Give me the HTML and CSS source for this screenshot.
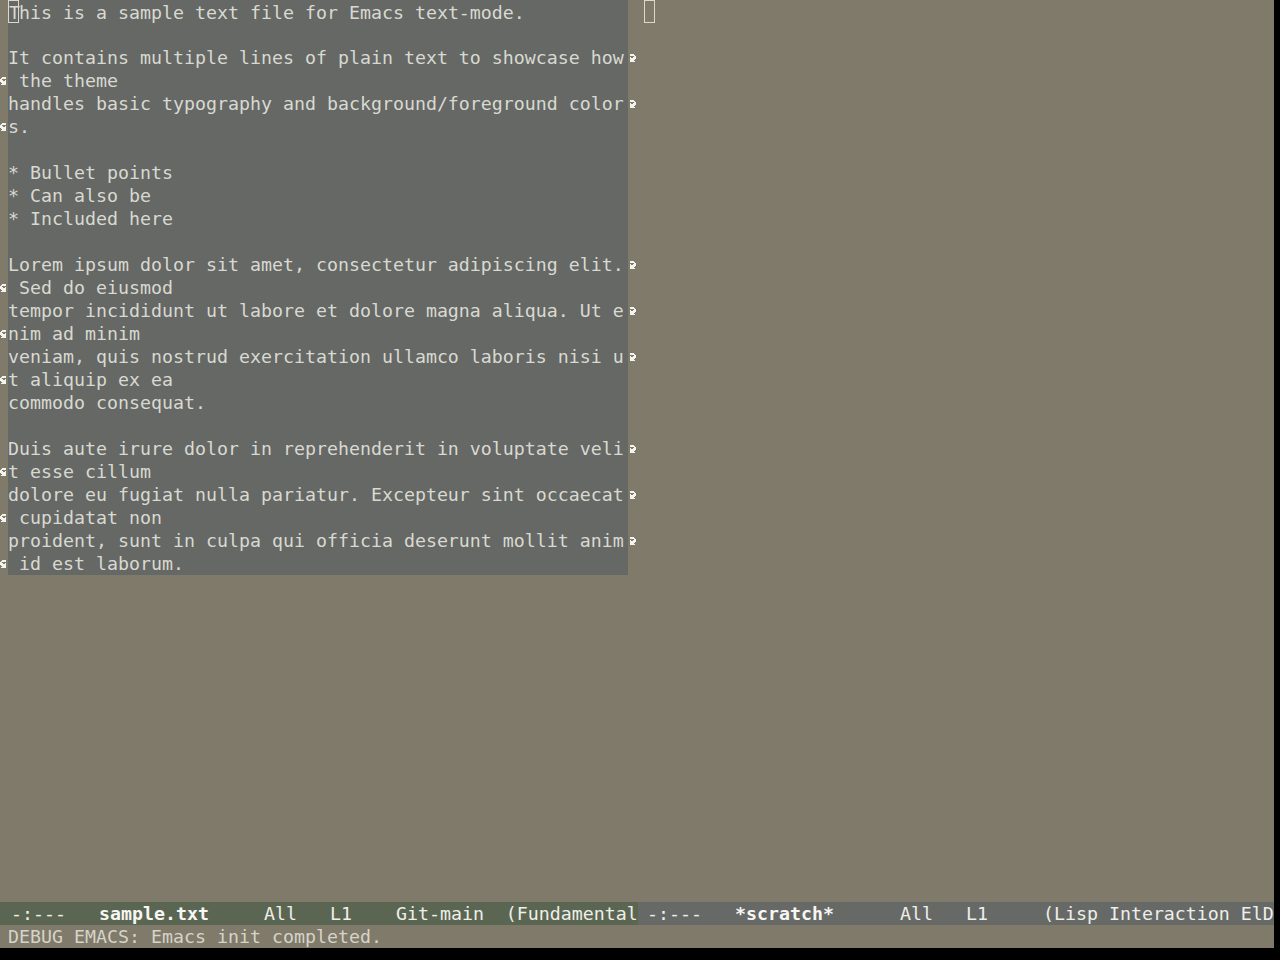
FILE: index.html
```html
<!DOCTYPE html>
<html lang="en">
<head>
    <meta charset="UTF-8">
    <title>sample.txt - Emacs</title>
    <link rel="stylesheet" href="styles.css">
</head>
<body>

    <svg class="defs" width="0" height="0">
        <!-- right-curly-arrow / left-curly-arrow fringe bitmaps, 8x8 -->
        <symbol id="rca" viewBox="0 0 8 8">
            <path d="M2 0h4v1h-4z M2 1h5v1h-5z M6 2h2v1h-2z M2 3h1v1h-1z M5 3h3v1h-3z M2 4h6v1h-6z M2 5h5v1h-5z M2 6h4v1h-4z M2 7h5v1h-5z"/>
        </symbol>
        <symbol id="lca" viewBox="0 0 8 8">
            <path d="M2 0h4v1h-4z M1 1h5v1h-5z M0 2h2v1h-2z M0 3h3v1h-3z M5 3h1v1h-1z M0 4h6v1h-6z M1 5h5v1h-5z M2 6h4v1h-4z M1 7h5v1h-5z"/>
        </symbol>
    </svg>

    <div class="frame">
        <div class="windows">
            <div class="window">
                <div class="line"><span class="fringe"></span><span class="text"><span class="cursor">T</span>his is a sample text file for Emacs text-mode.</span><span class="fringe"></span></div>
                <div class="line"><span class="fringe"></span><span class="text"></span><span class="fringe"></span></div>
                <div class="line"><span class="fringe"></span><span class="text">It contains multiple lines of plain text to showcase how</span><span class="fringe"><svg class="arrow"><use href="#rca"/></svg></span></div>
                <div class="line"><span class="fringe"><svg class="arrow"><use href="#lca"/></svg></span><span class="text"> the theme</span><span class="fringe"></span></div>
                <div class="line"><span class="fringe"></span><span class="text">handles basic typography and background/foreground color</span><span class="fringe"><svg class="arrow"><use href="#rca"/></svg></span></div>
                <div class="line"><span class="fringe"><svg class="arrow"><use href="#lca"/></svg></span><span class="text">s.</span><span class="fringe"></span></div>
                <div class="line"><span class="fringe"></span><span class="text"></span><span class="fringe"></span></div>
                <div class="line"><span class="fringe"></span><span class="text">* Bullet points</span><span class="fringe"></span></div>
                <div class="line"><span class="fringe"></span><span class="text">* Can also be</span><span class="fringe"></span></div>
                <div class="line"><span class="fringe"></span><span class="text">* Included here</span><span class="fringe"></span></div>
                <div class="line"><span class="fringe"></span><span class="text"></span><span class="fringe"></span></div>
                <div class="line"><span class="fringe"></span><span class="text">Lorem ipsum dolor sit amet, consectetur adipiscing elit.</span><span class="fringe"><svg class="arrow"><use href="#rca"/></svg></span></div>
                <div class="line"><span class="fringe"><svg class="arrow"><use href="#lca"/></svg></span><span class="text"> Sed do eiusmod</span><span class="fringe"></span></div>
                <div class="line"><span class="fringe"></span><span class="text">tempor incididunt ut labore et dolore magna aliqua. Ut e</span><span class="fringe"><svg class="arrow"><use href="#rca"/></svg></span></div>
                <div class="line"><span class="fringe"><svg class="arrow"><use href="#lca"/></svg></span><span class="text">nim ad minim</span><span class="fringe"></span></div>
                <div class="line"><span class="fringe"></span><span class="text">veniam, quis nostrud exercitation ullamco laboris nisi u</span><span class="fringe"><svg class="arrow"><use href="#rca"/></svg></span></div>
                <div class="line"><span class="fringe"><svg class="arrow"><use href="#lca"/></svg></span><span class="text">t aliquip ex ea</span><span class="fringe"></span></div>
                <div class="line"><span class="fringe"></span><span class="text">commodo consequat.</span><span class="fringe"></span></div>
                <div class="line"><span class="fringe"></span><span class="text"></span><span class="fringe"></span></div>
                <div class="line"><span class="fringe"></span><span class="text">Duis aute irure dolor in reprehenderit in voluptate veli</span><span class="fringe"><svg class="arrow"><use href="#rca"/></svg></span></div>
                <div class="line"><span class="fringe"><svg class="arrow"><use href="#lca"/></svg></span><span class="text">t esse cillum</span><span class="fringe"></span></div>
                <div class="line"><span class="fringe"></span><span class="text">dolore eu fugiat nulla pariatur. Excepteur sint occaecat</span><span class="fringe"><svg class="arrow"><use href="#rca"/></svg></span></div>
                <div class="line"><span class="fringe"><svg class="arrow"><use href="#lca"/></svg></span><span class="text"> cupidatat non</span><span class="fringe"></span></div>
                <div class="line"><span class="fringe"></span><span class="text">proident, sunt in culpa qui officia deserunt mollit anim</span><span class="fringe"><svg class="arrow"><use href="#rca"/></svg></span></div>
                <div class="line"><span class="fringe"><svg class="arrow"><use href="#lca"/></svg></span><span class="text"> id est laborum.</span><span class="fringe"></span></div>
            </div>

            <div class="window">
                <div class="line"><span class="fringe"></span><span class="scratch"><span class="cursor"> </span></span></div>
            </div>
        </div>

        <div class="mode-lines">
            <div class="mode-line active"> -:---   <b>sample.txt</b>     All   L1    Git-main  (Fundamental</div>
            <div class="mode-line inactive"> -:---   <b>*scratch*</b>      All   L1     (Lisp Interaction ElD</div>
        </div>

        <div class="echo">DEBUG EMACS: Emacs init completed.</div>
    </div>

</body>
</html>
```

FILE: styles.css
```css
body {
    margin: 0;
    padding: 0;
    background: #000;
    font-family: "DejaVu Sans Mono", monospace;
    font-size: 18.27px;
    line-height: 23px;
    color: #d9d9d1;
}

.defs {
    position: absolute;
}

.frame {
    width: 1274px;
    height: 948px;
    background: #7f7a6a;
    display: flex;
    flex-direction: column;
}

.windows {
    height: 902px;
    display: flex;
}

.window {
    width: 636px;
    flex-shrink: 0;
}

.line {
    display: flex;
    height: 23px;
}

.fringe {
    width: 8px;
    flex-shrink: 0;
}

.arrow {
    display: block;
    width: 8px;
    height: 8px;
    margin-top: 8px;
    fill: #f4f4ee;
    shape-rendering: crispEdges;
}

.text {
    width: 620px;
    flex-shrink: 0;
    background: #656865;
    white-space: pre;
    overflow: hidden;
}

.cursor {
    display: inline-block;
    width: 11px;
    height: 23px;
    box-sizing: border-box;
    border: 1px solid #ddd8c8;
    white-space: pre;
}

.scratch {
    white-space: pre;
}

.mode-lines {
    height: 23px;
    display: flex;
}

.mode-line {
    height: 23px;
    white-space: pre;
    overflow: hidden;
    color: #eeeeea;
}

.mode-line b {
    font-weight: bold;
    color: #f6f6f2;
}

.active {
    width: 638px;
    flex-shrink: 0;
    background: #5b6652;
}

.inactive {
    flex: 1;
    background: #676966;
    text-indent: -2px;
}

.echo {
    height: 23px;
    padding-left: 8px;
    white-space: pre;
    color: #d6d3c8;
}
```
